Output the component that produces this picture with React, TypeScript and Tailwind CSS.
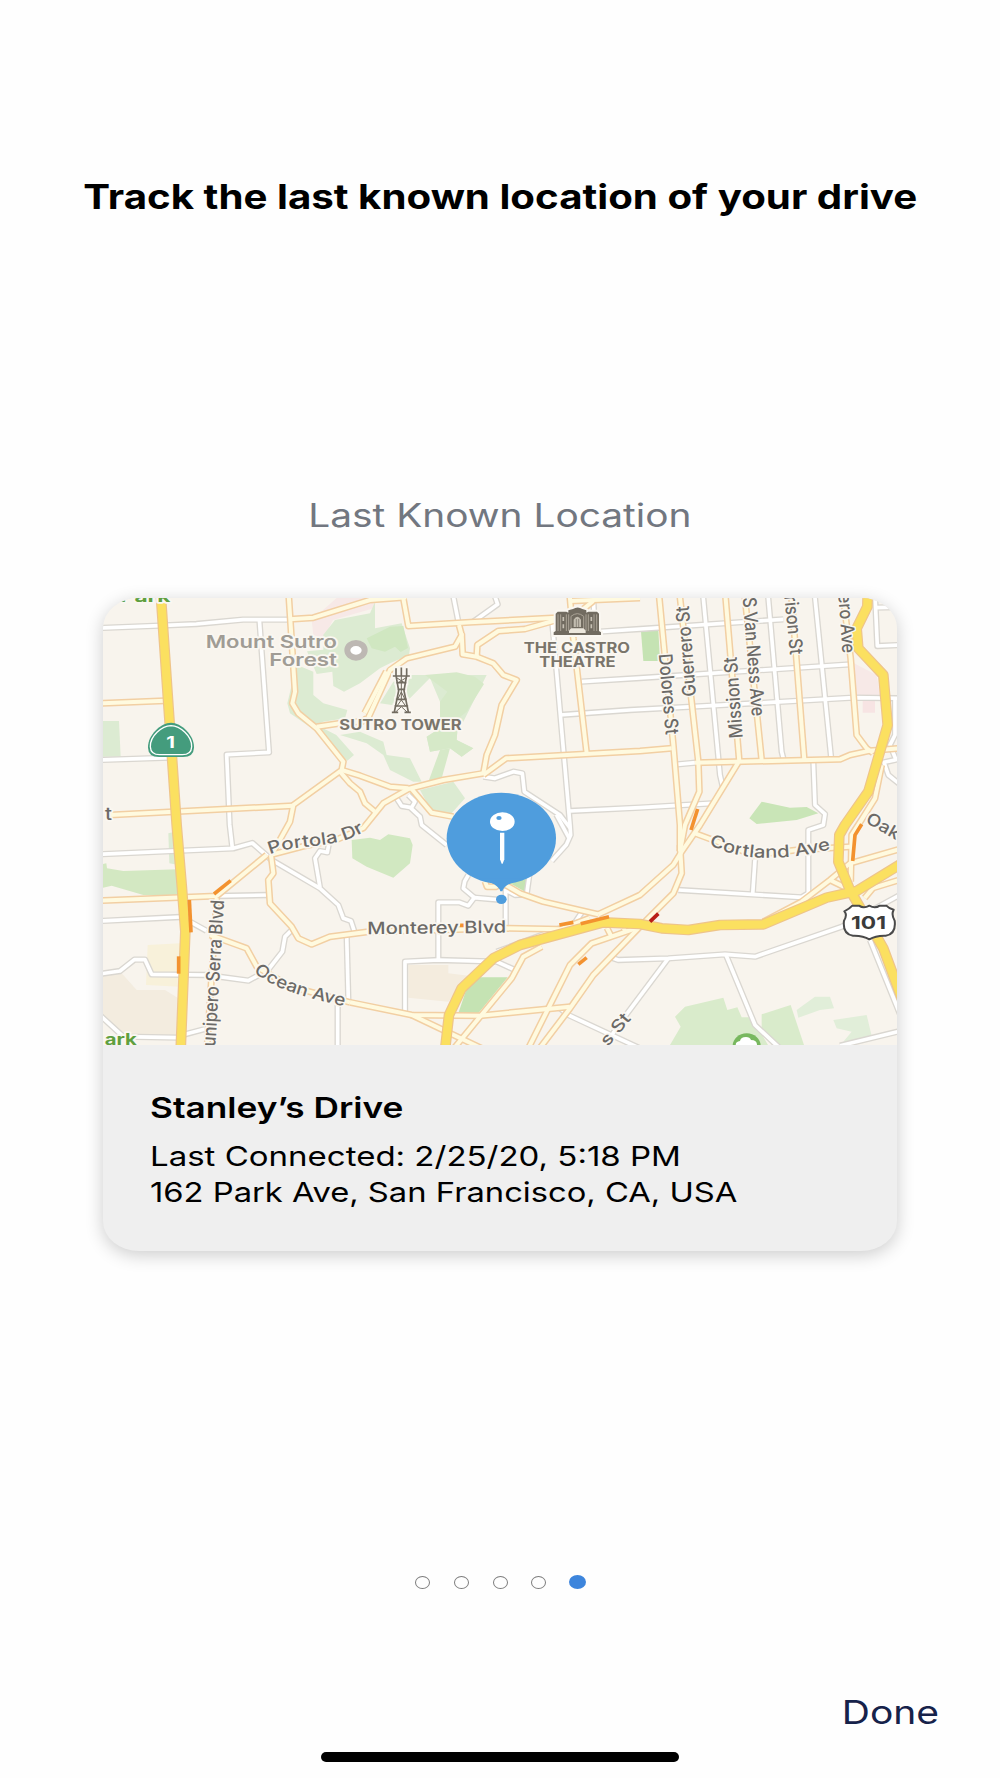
import { useId } from 'react';

type Point = string;

// The map is drawn on a 2382 x 1341 canvas, three units to a pixel.
const GREENS: { points: Point; fill: string }[] = [
  { points: '581,200 631,221 631,291 661,316 733,336 726,361 661,371 641,381 700,411 753,471 733,488 626,391 561,346 553,316', fill: '#dcebd2' },
  { points: '696,66 801,46 816,11 816,91 896,76 921,151 918,171 861,196 831,211 771,256 723,281 691,264 688,221 641,228 612,160 661,155 661,110', fill: '#dcebd2' },
  { points: '791,121 861,86 901,84 915,150 893,162 876,146 846,161 806,151', fill: '#d0e7c1' },
  { points: '831,316 871,251 921,231 1151,231 1081,371 1066,361 1061,426 1111,451 1076,476 1041,451 981,461 971,416 1011,391 1011,311 981,240 921,301 866,321', fill: '#dcebd2' },
  { points: '966,231 1061,223 1116,236 1143,258 1091,341 1066,361 1061,426 1111,451 1076,476 1041,451 981,461 971,416 1011,391 1011,311 1033,281', fill: '#d6e9c8' },
  { points: '711,411 771,401 841,431 851,471 921,481 956,551 931,551 861,516 841,471 791,436', fill: '#dcebd2' },
  { points: '1011,456 1041,451 1016,541 976,551', fill: '#d6e9c8' },
  { points: '951,576 1051,551 1086,601 1041,651 986,641', fill: '#dcebd2' },
  { points: '0,369 48,369 53,476 0,476', fill: '#dcebd2' },
  { points: '1614,101 1666,96 1671,189 1621,189', fill: '#c5e3b3' },
  { points: '1976,611 2061,629 2111,627 2146,646 2081,666 1961,678 1939,661', fill: '#c9e5b7' },
  { points: '0,798 10,796 12,811 61,819 226,814 231,891 121,891 26,863 0,869', fill: '#d3e8c2' },
  { points: '196,706 216,701 226,801 199,796', fill: '#dcebd2' },
  { points: '746,726 801,719 831,726 856,709 921,721 929,741 921,796 871,839 791,806 748,781', fill: '#d1e8c1' },
  { points: '1121,1138 1214,1138 1126,1246 1066,1246 1091,1171', fill: '#c5e3b3' },
  { points: '1221,856 1276,841 1266,881', fill: '#c5e3b3' },
  { points: '1701,1341 1733,1286 1716,1256 1746,1226 1861,1199 1873,1236 1903,1228 1916,1258 1946,1258 1995,1341', fill: '#d9ebcb' },
  { points: '1976,1249 2063,1221 2103,1341 2021,1341 1976,1291', fill: '#d9ebcb' },
  { points: '2081,1236 2136,1196 2181,1196 2193,1231 2151,1236 2086,1259', fill: '#e1eed9' },
  { points: '2191,1266 2291,1251 2309,1326 2221,1331 2246,1301 2201,1291', fill: '#e1eed9' },
];

const LANDS: { points: Point; fill: string }[] = [
  { points: '701,0 815,0 815,30 690,66 661,121 631,111 626,66', fill: '#f7e9e7' },
  { points: '2253,196 2321,231 2333,301 2256,296', fill: '#f7e9e7' },
  { points: '2279,309 2316,309 2316,344 2279,344', fill: '#f7e4e3' },
  { points: '134,1041 231,1036 231,1166 129,1161', fill: '#f8f1da' },
  { points: '0,1131 56,1126 101,1176 186,1176 226,1201 223,1316 61,1311 0,1251', fill: '#f3ecdf' },
  { points: '916,1101 1036,1101 1036,1126 1096,1133 1036,1211 916,1199', fill: '#f4ecde' },
  { points: '581,316 621,341 679,363 631,373 601,346', fill: '#a8d4ee' },
];

const STREETS: Point[] = [
  '-10,90 170,83 280,78 420,65 565,65',
  '469,64 498,463 371,470 380,680 388,749',
  '-10,486 200,479',
  '-10,769 391,751 448,735 506,786 651,871 706,921 721,961 744,969 756,1006',
  '651,869 636,781 651,759 673,763 677,741',
  '-10,969 231,957',
  '261,971 310,998',
  '341,894 496,891',
  '-10,1128 51,1119 94,1085 126,1085 146,1129 311,1131 436,1148 495,1116 538,1061 546,1016 566,996',
  '-10,1251 61,1316 225,1319',
  '246,1309 306,1293',
  '731,1011 736,1206',
  '704,1221 704,1351',
  '1050,-10 1068,81',
  '1174,-10 1184,19 1111,71',
  '1348,76 1401,681 1403,711 1390,740 1346,789',
  '1470,-10 1474,60',
  '1491,101 1611,93 2041,64',
  '1436,251 1611,240 2241,199',
  '1371,351 1581,336 1826,323 2251,299 2392,301',
  '1141,536 1176,541 1231,521 1258,526 1264,581 1371,651 1401,690',
  '1360,650 1398,720',
  '1401,639 1611,629 1826,616',
  '881,601 896,624 921,628 951,656 956,681 1031,741',
  '916,591 936,611 926,628',
  '1800,-10 1851,531 1859,566',
  '1995,-10 2036,461 2041,481',
  '2135,-10 2184,476',
  '2316,-10 2323,144 2392,141',
  '2316,29 2392,27',
  '1723,499 1786,493',
  '2131,491 2136,621 2166,648 2161,681 2116,696 2116,886',
  '2376,301 2376,411 2361,441 2379,485 2343,493 2356,531 2392,560',
  '1726,876 2096,898 2121,883',
  '1956,786 1949,889',
  '1526,1079 1546,1086 1696,1081 1866,1069 1956,1076 2216,986 2392,890',
  '1696,1081 1581,1235 1561,1261 1506,1341',
  '1869,1071 1956,1281 2031,1351',
  '2211,1343 2392,1299',
  '2301,1026 2392,1251',
  '1006,1088 1006,913 1068,913 1096,923 1114,899 1196,906',
  '1114,899 1081,871 1085,850 1096,831',
  '906,1246 906,1091 1006,1086 1181,1091 1236,1116',
  '1208,981 1208,876 1236,891 1271,889 1279,831',
  '1411,981 1441,936',
  '1181,1061 1371,991',
  '1371,1231 1396,1251 1611,1351',
];

const ROADS: Point[] = [
  '557,-10 576,281 568,316 586,346 641,391 721,491 716,516 571,621 561,671 506,770',
  '561,64 631,59 801,6 910,-2',
  '-10,316 186,308',
  '21,651 571,623',
  '641,386 711,376 780,370 791,361',
  '795,361 861,216 911,181 1056,146 1076,111 1068,81',
  '785,345 850,220',
  '716,516 771,533 861,566 916,571',
  '711,521 741,556 771,581 786,616 816,641',
  '899,-10 916,84 1101,73 1361,59',
  '1076,106 1079,169 1121,176 1171,196 1201,231 1241,246 1196,321 1176,411 1151,471 1141,526',
  '1121,176 1123,141 1186,99 1266,93 1361,66',
  '1141,526 1021,546 916,573 841,616 781,690 701,725 600,745 506,770',
  '1141,531 1209,481 1611,459 1706,451',
  '926,573 986,644 1051,656',
  '1400,-10 1411,121 1451,466',
  '1401,9 1611,0',
  '1471,9 1420,50',
  '1668,-10 1711,441 1731,681 1731,760',
  '1730,-10 1786,491 1789,581 1746,681 1731,760',
  '1867,-10 1909,491',
  '1925,-10 1976,486',
  '2065,-10 2104,486',
  '2220,-10 2243,181 2261,411 2291,451 2310,465',
  '1776,494 2211,484 2241,471 2301,458 2392,451',
  '1906,493 1791,681 1736,761 1711,801 1611,891 1486,949',
  '1731,741 1736,826 1711,886 1611,986 1471,1131 1401,1231 1310,1351',
  '1601,990 1466,1036 1401,1101 1346,1211 1276,1351',
  '1512,990 1525,1015',
  '1562,990 1570,1005',
  '1776,706 1951,771 2081,756 2241,746',
  '2392,753 2241,796 2181,846 2096,911 1981,971',
  '2181,846 2230,870',
  '2336,501 2316,601 2276,665 2246,711 2243,851',
  '2392,845 2310,870 2285,900',
  '741,1213 926,1251 1131,1253 1401,1226',
  '926,1251 1136,1351',
  '504,771 511,826 496,846 501,916 566,986 586,1021 626,1039 681,1016 796,1001 1211,991 1371,994 1460,960',
  '1208,861 1251,886 1321,911 1486,949',
  '1146,850 1152,866 1180,866 1182,850',
  '1316,1046 1261,1076 1226,1141 1053,1351',
  '-10,908 341,894 491,771',
  '321,1011 431,1051 461,1106 560,1165 741,1213',
  '341,900 312,1351',
];

const HIGHWAYS: Point[] = [
  '173,-15 221,681 236,860 247,1001 233,1356',
  '1026,1356 1038,1251 1076,1171 1171,1081 1251,1041 1501,973 1611,978 1676,991 1756,996 1851,981 1981,979 2171,899 2261,879 2400,794',
  '2294,-15 2293,26 2261,91 2266,151 2341,231 2354,381 2296,581 2226,681 2209,711 2206,791 2241,876 2341,1051 2400,1210',
];

const TRAFFIC: Point[] = [
  '333,888 383,848',
  '259,906 264,1003',
  '227,1075 227,1127',
  '1369,981 1411,973',
  '1433,977 1518,956',
  '1426,1099 1451,1079',
  '1071,982 1086,982',
  '1784,633 1764,696',
  '2276,679 2256,711 2249,789',
];

interface LinesProps {
  lines: Point[];
  casing: string;
  fill: string;
  width: number;
  edge: number;
}

function Lines({ lines, casing, fill, width, edge }: LinesProps) {
  return (
    <g fill="none" strokeLinejoin="round">
      {lines.map((points) => (
        <polyline key={points} points={points} stroke={casing} strokeWidth={width + edge} />
      ))}
      {lines.map((points) => (
        <polyline key={points} points={points} stroke={fill} strokeWidth={width} />
      ))}
    </g>
  );
}

interface LabelProps {
  x: number;
  y: number;
  length: number;
  text: string;
  rotate?: number;
  size?: number;
  weight?: number;
  color?: string;
}

function Label({ x, y, length, text, rotate = 0, size = 51, weight = 500, color = '#6c6a67' }: LabelProps) {
  return (
    <text
      transform={`translate(${x} ${y}) rotate(${rotate})`}
      textLength={length}
      lengthAdjust="spacingAndGlyphs"
      fontSize={size}
      fontWeight={weight}
      fill={color}
      stroke="#faf7f1"
      strokeWidth={10}
      strokeLinejoin="round"
      paintOrder="stroke"
    >
      {text}
    </text>
  );
}

function CurvedLabel({ path, text, length }: { path: string; text: string; length: number }) {
  const id = useId();
  return (
    <>
      <path id={id} d={path} fill="none" />
      <text
        fontSize={51}
        fontWeight={500}
        fill="#6c6a67"
        stroke="#faf7f1"
        strokeWidth={10}
        strokeLinejoin="round"
        paintOrder="stroke"
      >
        <textPath href={`#${id}`} textLength={length} lengthAdjust="spacingAndGlyphs">
          {text}
        </textPath>
      </text>
    </>
  );
}

function TowerIcon() {
  return (
    <g fill="none" strokeLinecap="square">
      {['#faf7f1', '#716b60'].map((color, i) => (
        <g key={color} stroke={color}>
          <path
            d="M879 213v20M895 211v22M911 213v20M872 234h46M880 238l7 40-13 64M910 238l-7 40 13 64M882 254h26M886 274h18M881 304h28M877 324h36M869 343h14M907 343h14"
            strokeWidth={i === 0 ? 16 : 5}
          />
          <path
            d="M882 240l22 14M908 240l-22 14M895 236v66M885 302l10-20 10 20M882 324l13-18 13 18M878 342l17-16 17 16"
            strokeWidth={i === 0 ? 16 : 3}
          />
        </g>
      ))}
    </g>
  );
}

function TheatreIcon() {
  return (
    <g>
      <path
        d="M1352 111v-8l6-4V47l6-6h26l6 3v-7l14-4q14-9 28 0l12 4v7l6-3h26l6 6v52l6 4v8z"
        fill="#716b60"
        stroke="#faf7f1"
        strokeWidth={12}
        paintOrder="stroke"
      />
      <path d="M1365 49v50M1373 49v50M1390 49v50M1397 49v50M1449 49v50M1456 49v50M1473 49v50M1481 49v50" stroke="#aaa396" strokeWidth={3} />
      <path d="M1381 57v12M1381 79v12M1465 57v12M1465 79v12" stroke="#c8c2b5" strokeWidth={5} />
      <path d="M1404 91V55q19-16 38 0v36" fill="none" stroke="#aaa396" strokeWidth={3} />
      <path d="M1412 87V65q11-18 22 0v22z" fill="#c2bcaf" />
      <path d="M1420 87V63M1427 87V63" stroke="#716b60" strokeWidth={2} />
      <path d="M1398 98l6-7h38l6 7v7h-50z" fill="#ece7dc" />
    </g>
  );
}

function LocationPin() {
  return (
    <g fill="#4f9ddd">
      <ellipse cx={1195} cy={721} rx={164} ry={137} />
      <path d="M1130 842Q1188 858 1192 880H1198Q1202 858 1262 842z" />
      <ellipse cx={1195} cy={904} rx={16} ry={14} />
      <ellipse cx={1198} cy={671} rx={37} ry={28} fill="#fff" />
      <path d="M1191 704h13v80l-5 13h-3l-5-13z" fill="#fff" />
      <ellipse cx={1188} cy={660} rx={8} ry={6} />
    </g>
  );
}

function MapView() {
  return (
    <svg viewBox="0 0 2382 1341" className="block h-[447px] w-full bg-[#f8f4ed] font-[Inter,sans-serif]">
      {[...LANDS, ...GREENS].map((area) => (
        <polygon key={area.points} points={area.points} fill={area.fill} />
      ))}
      <Lines lines={STREETS} casing="#dad7d1" fill="#ffffff" width={11} edge={8} />
      <Lines lines={ROADS} casing="#f2cfa3" fill="#fffadf" width={12} edge={9} />
      <Lines lines={HIGHWAYS} casing="#eec48a" fill="#fbe060" width={25} edge={7} />

      {/* Traffic */}
      <g fill="none" stroke="#f3922f" strokeWidth={11}>
        {TRAFFIC.map((points) => (
          <polyline key={points} points={points} />
        ))}
        <polyline points="1641,971 1666,947" stroke="#b91f17" />
      </g>

      {/* Street names */}
      <Label x={1667} y={169} length={243} rotate={85} size={56} text="Dolores St" />
      <Label x={1779} y={294} length={272} rotate={-94.6} size={56} text="Guerrero St" />
      <Label x={1919} y={419} length={244} rotate={-94.2} size={56} text="Mission St" />
      <Label x={1919} y={-1} length={358} rotate={85.5} size={56} text="S Van Ness Ave" />
      <Label x={2044} y={-6} length={178} rotate={84.5} size={56} text="rison St" />
      <Label x={2206} y={-12} length={179} rotate={86} size={56} text="ero Ave" />
      <Label x={337} y={1346} length={440} rotate={-86.6} size={56} text="unipero Serra Blvd" />
      <Label x={793} y={1009} length={417} rotate={-0.7} text="Monterey Blvd" />
      <Label x={2285} y={672} length={108} rotate={30} text="Oak" />
      <Label x={1514} y={1348} length={112} rotate={-50} text="s St" />
      <Label x={6} y={666} length={21} text="t" />
      <CurvedLabel path="M501 770C560 744 640 748 700 733S760 712 800 692" length={294} text="Portola Dr" />
      <CurvedLabel path="M452 1120C500 1168 600 1198 740 1228" length={294} text="Ocean Ave" />
      <CurvedLabel path="M1817 738C1900 788 2040 794 2200 749" length={376} text="Cortland Ave" />

      {/* Places */}
      <Label x={308} y={151} length={394} size={52} weight={600} color="#a09c95" text="Mount Sutro" />
      <Label x={499} y={203} length={203} size={52} weight={600} color="#a09c95" text="Forest" />
      <ellipse cx={759} cy={157} rx={26} ry={22} fill="#fff" stroke="#bdb8b3" strokeWidth={18} />
      <Label x={709} y={397} length={367} size={42} weight={700} color="#7a756b" text="SUTRO TOWER" />
      <Label x={1262} y={164} length={319} size={42} weight={700} color="#7a756b" text="THE CASTRO" />
      <Label x={1309} y={207} length={229} size={42} weight={700} color="#7a756b" text="THEATRE" />
      <Label x={51} y={13} length={151} size={48} weight={700} color="#5f9f3f" text="Park" />
      <Label x={5} y={1340} length={96} size={46} weight={700} color="#5f9f3f" text="ark" />
      <TowerIcon />
      <TheatreIcon />
      <ellipse cx={1931} cy={1344} rx={42} ry={38} fill="#78b85f" />
      <path d="M1899 1345q-4-14 12-16 2-12 18-12 12 0 15 9 20 0 18 19z" fill="#fff" />

      {/* Route shields */}
      <path d="M204 374C234 374 274 410 273 449Q272 477 240 477H168Q136 477 135 449C134 410 174 374 204 374z" fill="#449c7d" />
      <path d="M204 383C232 384 267 414 266 446Q265 470 238 470H170Q143 470 142 446C141 414 176 384 204 383z" fill="none" stroke="#fff" strokeWidth={4} />
      <text x={190} y={449} textLength={26} lengthAdjust="spacingAndGlyphs" fontSize={46} fontWeight={700} fill="#fff">
        1
      </text>
      <path
        d="M2299 923Q2316 933 2330 923L2350 923Q2358 932 2372 935Q2364 950 2375 968Q2380 1008 2348 1013Q2318 1012 2299 1024Q2280 1012 2250 1013Q2218 1008 2223 968Q2234 950 2224 940Q2240 932 2248 923L2268 923Q2282 933 2299 923z"
        fill="#fff"
        stroke="#4a4a4a"
        strokeWidth={6}
        strokeLinejoin="round"
      />
      <text x={2244} y={992} textLength={105} lengthAdjust="spacingAndGlyphs" fontSize={54} fontWeight={700} fill="#3b3b3b">
        101
      </text>

      <LocationPin />
    </svg>
  );
}

function PageDots({ count, active }: { count: number; active: number }) {
  return (
    <div className="flex h-4 items-center justify-center">
      {Array.from({ length: count }, (_, i) => (
        <div key={i} className="flex w-[38.6px] justify-center">
          <span
            className={
              i === active
                ? 'h-[14px] w-[17px] rounded-[50%] bg-[#3d85dc]'
                : 'h-[13px] w-[15px] rounded-[50%] border-[1.5px] border-[#7c7c7c]'
            }
          />
        </div>
      ))}
    </div>
  );
}

export default function App() {
  return (
    <main className="flex h-[1778px] w-[1000px] flex-col overflow-hidden bg-[#fefefe] font-[Inter,sans-serif] whitespace-nowrap text-black">
      <h1 className="mt-[177px] flex h-10 justify-center text-[34px] leading-10 font-bold">
        <span className="scale-x-[1.184]">Track the last known location of your drive</span>
      </h1>

      <h2 className="mt-[279px] flex h-10 justify-center text-[32px] leading-10 text-[#727780]">
        <span className="scale-x-[1.214]">Last Known Location</span>
      </h2>

      <section className="mx-[103px] mt-[62px] h-[653px] overflow-hidden rounded-[36px/30px] bg-[#efefef] shadow-[0_4px_18px_rgba(0,0,0,0.2)]">
        <MapView />
        <div className="flex flex-col items-start pt-[45px] pl-[47px] text-[27.5px] leading-9">
          <h3 className="mb-3 origin-left scale-x-[1.215] text-[29px] font-semibold">Stanley’s Drive</h3>
          <p className="origin-left scale-x-[1.2]">Last Connected: 2/25/20, 5:18 PM</p>
          <p className="origin-left scale-x-[1.19]">162 Park Ave, San Francisco, CA, USA</p>
        </div>
      </section>

      <div className="mt-[323px]">
        <PageDots count={5} active={4} />
      </div>

      <div className="mt-[103px] flex justify-end pr-[61px]">
        <button type="button" className="h-10 origin-right scale-x-[1.2] text-[32.5px] leading-10 text-[#16224a]">
          Done
        </button>
      </div>

      <div className="mx-auto mt-[19px] h-[10px] w-[358px] rounded-full bg-black" />
    </main>
  );
}
